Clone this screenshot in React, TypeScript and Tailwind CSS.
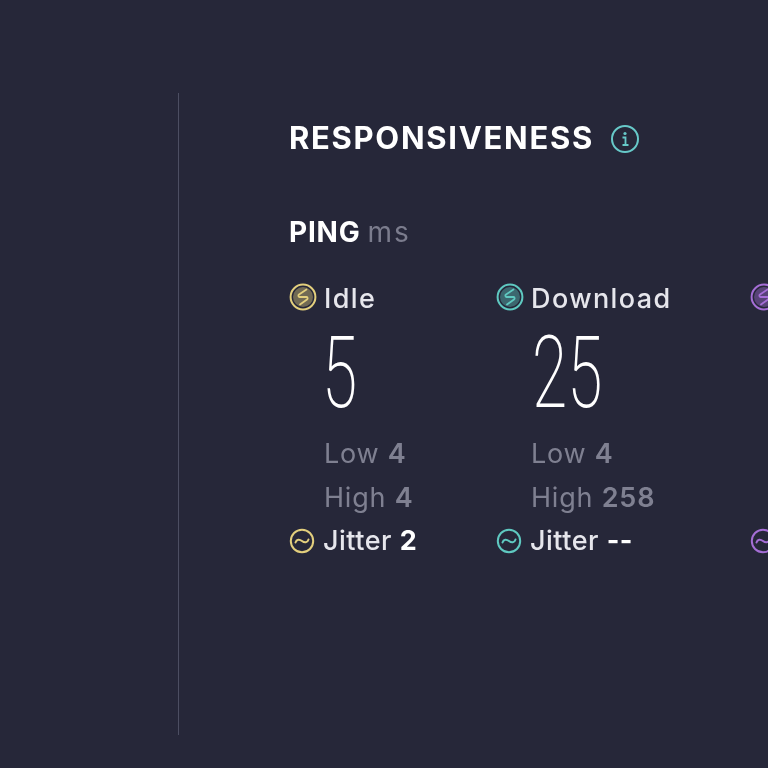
const F = { fontFamily: '"Inter", "Liberation Sans", sans-serif' };

function SpeedIcon({ color }: { color: string }) {
  return (
    <svg width="28" height="28" viewBox="0 0 28 28" fill="none" className="shrink-0">
      <circle cx="14" cy="14" r="12.4" stroke={color} strokeWidth="2" />
      <circle cx="14" cy="14" r="10" fill={color} fillOpacity="0.4" />
      <path d="M17.5 6.5L10 11.5c-1 .8-.8 2.2.5 2.5h7c1.3.3 1.5 1.7.5 2.5L11 21.5" stroke={color} strokeWidth="1.8" strokeLinecap="round" strokeLinejoin="round" />
    </svg>
  );
}

function JitterIcon({ color }: { color: string }) {
  return (
    <svg width="26" height="26" viewBox="0 0 26 26" fill="none" className="shrink-0">
      <circle cx="13" cy="13" r="11.2" stroke={color} strokeWidth="2" />
      <path d="M6.5 14.5c1-3.5 4-3.5 6.5-1.5s5.5 2 6.5-1.5" stroke={color} strokeWidth="2" strokeLinecap="round" />
    </svg>
  );
}

function Column({ label, value, low, high, jitter, color, w, numClass }: { label?: string; value?: string; low?: string; high?: string; jitter?: string; color: string; w: string; numClass?: string }) {
  return (
    <div className={`flex flex-col shrink-0 ${w}`}>
      <div className="flex items-center gap-[7px] h-[28px] mt-[3px]">
        <SpeedIcon color={color} />
        {label && <span className="mt-[4px] text-[27px] font-medium text-[#e6e6ec] tracking-[1.4px]">{label}</span>}
      </div>
      <div className="ml-[35px] mt-[16px] h-[92px] flex items-center">
        {value && <span className={`block origin-left scale-x-[0.64] text-[100px] leading-none font-extralight text-white ${numClass ?? ""}`} style={{ fontFamily: '"Roboto", sans-serif' }}>{value}</span>}
      </div>
      <div className="ml-[35px] mt-[20px] flex flex-col gap-[15px] h-[73px] text-[27px] leading-[29px] text-[#7f8091] tracking-[0.8px]">
        {low && <div>Low <span className="font-semibold">{low}</span></div>}
        {high && <div>High <span className="font-semibold">{high}</span></div>}
      </div>
      <div className="flex items-center gap-[8px] mt-[15px] h-[28px]">
        <JitterIcon color={color} />
        {jitter && <span className="text-[27px] font-medium text-[#e6e6ec] tracking-[0.5px] whitespace-nowrap">Jitter <span className="font-bold text-white">{jitter}</span></span>}
      </div>
    </div>
  );
}

export default function App() {
  return (
    <div className="w-[768px] h-[768px] overflow-hidden bg-[#262739] pt-[93px] pl-[178px]" style={F}>
      <div className="h-[642px] border-l border-[#4c4e62] pl-[110px] pt-[27px] blur-[0.5px]">
        <div className="flex items-center h-[36px]">
          <span className="text-[31px] font-bold tracking-[1.7px] text-white">RESPONSIVENESS</span>
          <svg width="30" height="30" viewBox="0 0 30 30" fill="none" className="ml-[16px] mt-[1px] shrink-0">
            <circle cx="15" cy="15" r="13" stroke="#67c9c9" strokeWidth="2" />
            <circle cx="15" cy="9.5" r="1.6" fill="#67c9c9" />
            <path d="M12.5 13.5H15.5V20.5M12.5 21H18.5" stroke="#67c9c9" strokeWidth="1.8" />
          </svg>
        </div>
        <div className="mt-[55px] h-[32px] flex items-baseline gap-[7px]">
          <span className="text-[28px] font-bold text-white tracking-[0.8px]">PING</span>
          <span className="text-[28px] text-[#7b7c8d] tracking-[2px]">ms</span>
        </div>
        <div className="mt-[37px] flex w-[600px]">
          <Column w="w-[207px]" label="Idle" value="5" low="4" high="4" jitter="2" color="#e3cf7d" numClass="-ml-[2px]" />
          <Column w="w-[254px]" label="Download" value="25" low="4" high="258" jitter="--" color="#5fc9c1" numClass="ml-[1px]" />
          <Column w="w-[200px]" color="#a56ed6" />
        </div>
      </div>
    </div>
  );
}
